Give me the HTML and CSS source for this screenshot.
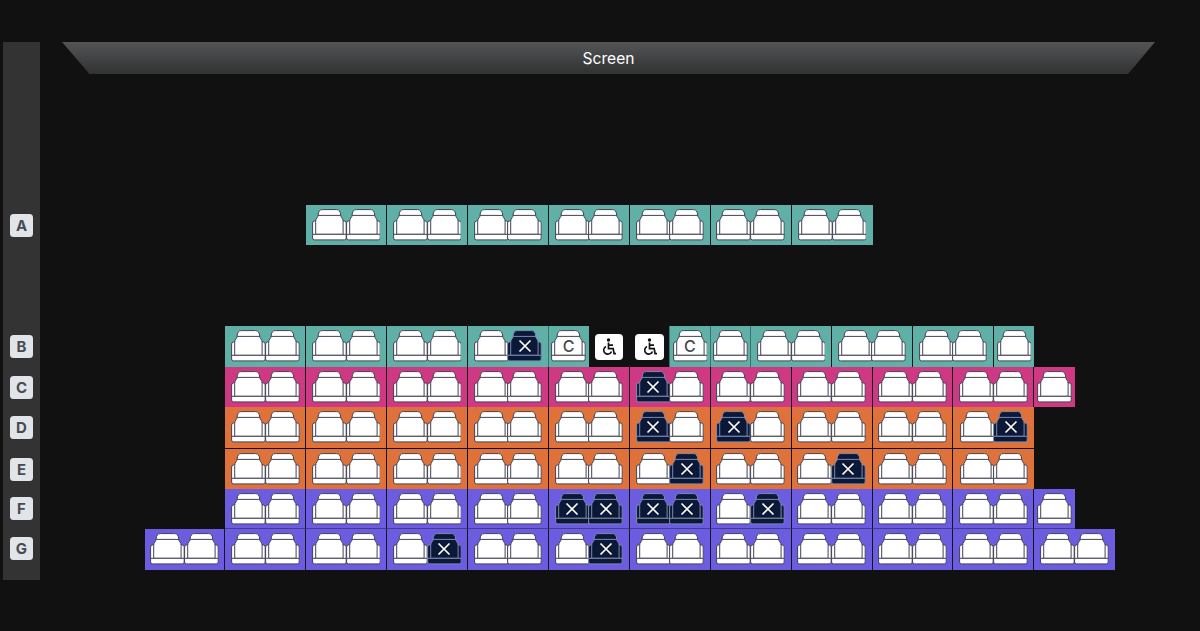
FILE: index.html
```html
<!DOCTYPE html>
<html lang="en">
<head>
<meta charset="utf-8">
<title>Seat selection</title>
<link rel="stylesheet" href="styles.css">
</head>
<body>
<svg class="symbols" aria-hidden="true">
  <symbol id="seat" viewBox="0 0 34.8 32">
    <path d="M3.8 12H2.5Q.6 12 .6 14V26H4.5V12ZM31 12h1.3q1.9 0 1.9 2V26H30.3V12Z"/>
    <path d="M3.7 25.3V12.5Q3.7 10 5 8.8Q6.1 7.6 6.1 6.2Q6.1 3.6 7.3 2Q8.3 .6 10.3 .6H24.5Q26.5 .6 27.5 2Q28.7 3.6 28.7 6.2Q28.7 7.6 29.8 8.8Q31.1 10 31.1 12.5V25.3Z"/>
    <path d="M6.1 6.4H28.7" fill="none"/>
    <path d="M.6 25.3H34.2V29Q34.2 30.9 32.3 30.9H2.5Q.6 30.9 .6 29Z"/>
  </symbol>
  <symbol id="cross" viewBox="0 0 14 14"><path d="M1.5 1.5L12.5 12.5M12.5 1.5L1.5 12.5"/></symbol>
  <symbol id="wheelchair" viewBox="0 0 16 18">
    <circle cx="7.5" cy="2" r="1.7" fill="#111"/>
    <path d="M7.5 4.4V10.7H12.2L13.1 15.6H15M7.7 7.2H12" fill="none" stroke="#111" stroke-width="1.7"/>
    <path d="M5 8.5A4 4 0 1 0 10.5 13.4" fill="none" stroke="#111" stroke-width="1.6"/>
  </symbol>
</svg>
<main class="hall">
  <aside class="labels tracks"></aside>
  <section class="auditorium">
    <div class="screen">Screen</div>
    <div class="seats tracks"></div>
  </section>
</main>
<script src="seats.js"></script>
</body>
</html>
```
FILE: styles.css
```css
body { margin: 0; background: #111; color: #fff; font-family: Inter, "Liberation Sans", sans-serif; }
.symbols { display: none; }
.hall { display: flex; box-sizing: border-box; width: 1200px; height: 631px; padding: 42px 0 0 3px; overflow: hidden; }
.tracks { display: grid; grid-template-rows: 40px 81px 41px 40px 42px 40px 40px 40.5px; }
.labels { box-sizing: border-box; width: 37px; height: 538px; padding-top: 163px; background: #333; }
.label { grid-row: var(--track); display: flex; align-items: center; justify-content: center; width: 23px; height: 23px; margin: 9px 0 0 7px; border-radius: 3.5px; background: #e1e4e9; color: #484c52; font-size: 15px; font-weight: 700; }
.label-f, .label-g { margin-top: 8.4px; }
.auditorium { width: 1160px; }
.screen { box-sizing: border-box; width: 1093px; height: 32px; margin-left: 22px; padding-top: 1px; background: linear-gradient(#525456, #313332); clip-path: polygon(0 0, 100% 0, 1066px 100%, 27.5px 100%); font-size: 15.6px; line-height: 32px; text-align: center; }
.seats { padding-top: 131px; }
.row { grid-row: var(--track); display: flex; }
.start-0 { margin-left: 104.5px; }
.start-1 { margin-left: 185.4px; }
.start-2 { margin-left: 266.3px; }
.cell { box-sizing: border-box; display: flex; justify-content: center; width: 80.9px; padding-top: 4px; border-right: 1px solid #15151c; }
.single { width: 40.45px; }
.cell:last-child { border-right: 0; }
.row-c .cell, .row-f .cell { padding-top: 3.6px; }
.row-d .cell { height: 41px; }
.teal .cell { background-color: #60b0a7; }
.pink .cell { background-color: #cf3883; }
.orange .cell { background-color: #df723b; }
.violet .cell { background-color: #6b5ce0; }
.violet.row-f .cell { border-bottom: 1px solid #433a91; }
.teal .cell.soft { border-right-color: #39736f; }
.teal .cell.open { border-right-color: transparent; }
.cell.access { align-items: center; padding: 0; border-color: transparent; background: none; }
.seat { display: grid; flex: none; width: 34.8px; height: 32px; }
.seat + .seat { margin-left: -1.1px; }
.seat > * { grid-area: 1 / 1; }
.shape { width: 34.8px; height: 32px; fill: #fff; stroke: #414252; stroke-width: 1; }
.taken .shape { fill: #0c1838; stroke: #7c8cae; }
.cross { place-self: center; width: 14px; height: 14px; fill: none; stroke: #fff; stroke-width: 1.7; }
.mark { place-self: center; color: #454850; font-size: 16px; line-height: 20px; font-weight: 500; }
.badge { display: flex; align-items: center; justify-content: center; width: 28.5px; height: 26px; border-radius: 4px; background: #fff; }
.badge svg { width: 16px; height: 18px; }
```
FILE: seats.js
```js
// s: free seat, x: taken seat, c: companion seat, w: wheelchair space
const rows = [
  { name: "A", track: 1, start: 2, tone: "teal", cells: "ss ss ss ss ss ss ss" },
  { name: "B", track: 3, start: 1, tone: "teal", cells: "ss ss ss sx c w w c s ss ss ss s" },
  { name: "C", track: 4, start: 1, tone: "pink", cells: "ss ss ss ss ss xs ss ss ss ss s" },
  { name: "D", track: 5, start: 1, tone: "orange", cells: "ss ss ss ss ss xs xs ss ss sx" },
  { name: "E", track: 6, start: 1, tone: "orange", cells: "ss ss ss ss ss sx ss sx ss ss" },
  { name: "F", track: 7, start: 1, tone: "violet", cells: "ss ss ss ss xx xx sx ss ss ss s" },
  { name: "G", track: 8, start: 0, tone: "violet", cells: "ss ss ss sx ss sx ss ss ss ss ss ss" }
];

const icon = (id, cls) => `<svg class="${cls}"><use href="#${id}"/></svg>`;

function seat(kind) {
  if (kind === "w") return `<span class="badge">${icon("wheelchair", "")}</span>`;
  const extra = kind === "x" ? icon("cross", "cross") : kind === "c" ? '<span class="mark">C</span>' : "";
  return `<span class="seat${kind === "x" ? " taken" : ""}">${icon("seat", "shape")}${extra}</span>`;
}

function cell(code, i, all) {
  const next = all[i + 1];
  let cls = "cell";
  if (code.length === 1) cls += " single";
  if (code === "w") cls += " access";
  if (next === "w") cls += " open";
  else if (next && (code.length === 1 || next.length === 1) && i + 2 < all.length) cls += " soft";
  return `<div class="${cls}">${[...code].map(seat).join("")}</div>`;
}

for (const r of rows) {
  const id = r.name.toLowerCase();
  document.querySelector(".labels").insertAdjacentHTML("beforeend",
    `<span class="label label-${id}" style="--track:${r.track}">${r.name}</span>`);
  document.querySelector(".seats").insertAdjacentHTML("beforeend",
    `<div class="row row-${id} start-${r.start} ${r.tone}" style="--track:${r.track}">${r.cells.split(" ").map(cell).join("")}</div>`);
}
```
